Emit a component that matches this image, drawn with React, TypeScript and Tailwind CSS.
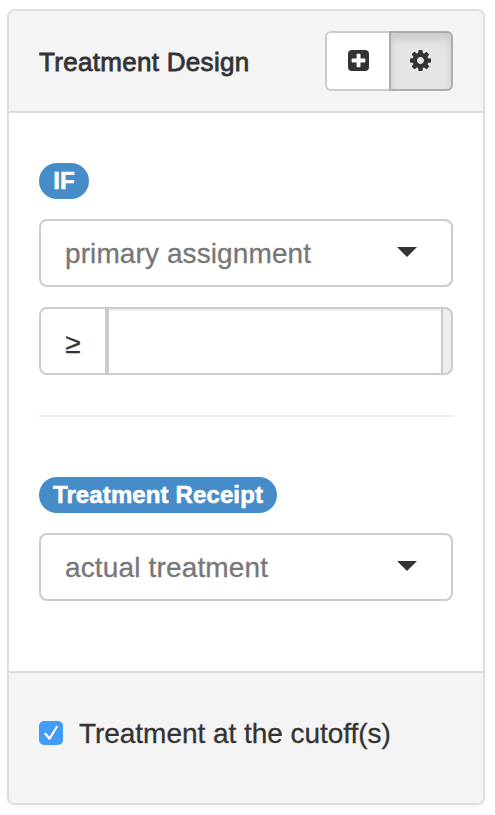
import React from "react";

function PlusSquare() {
  return (
    <svg width="21" height="21" viewBox="0 0 21 21" aria-hidden="true">
      <rect width="21" height="21" rx="4" fill="#333" />
      <path
        d="M9.4 3.7h2.3q.8 0 .8.8v4.1h4.1q.8 0 .8.8v2.2q0 .8-.8.8h-4.1v4.1q0 .8-.8.8H9.4q-.8 0-.8-.8v-4.1H4.4q-.8 0-.8-.8V9.4q0-.8.8-.8h4.2V4.5q0-.8.8-.8z"
        fill="#fff"
      />
    </svg>
  );
}

function Cog() {
  return (
    <svg width="21" height="21" viewBox="0 -128 1536 1536" fill="#333" fillRule="evenodd" aria-hidden="true">
      <path d="M1024 640q0 106-75 181t-181 75-181-75-75-181 75-181 181-75 181 75 75 181zm512-109v222q0 12-8 23t-20 13l-185 28q-19 54-39 91 35 50 107 138 10 12 10 25t-9 23q-27 37-99 108t-94 71q-12 0-26-9l-138-108q-44 23-91 38-16 136-29 186-7 28-36 28h-222q-14 0-24.5-8.5t-11.5-21.5l-28-184q-49-16-90-37l-141 107q-10 9-25 9-14 0-25-11-126-114-165-168-7-10-7-23 0-12 8-23 15-21 51-66.5t54-70.5q-27-50-41-99l-183-27q-13-2-21-12.5t-8-23.5v-222q0-12 8-23t19-13l186-28q14-46 39-92-40-57-107-138-10-12-10-24 0-10 9-23 26-36 98.5-107.5t94.5-71.5q13 0 26 10l138 107q44-23 91-38 16-136 29-186 7-28 36-28h222q14 0 24.5 8.5t11.5 21.5l28 184q49 16 90 37l142-107q9-9 24-9 13 0 25 10 129 119 165 170 7 8 7 22 0 12-8 23-15 21-51 66.5t-54 70.5q26 50 41 98l183 28q13 2 21 12.5t8 23.5z" />
    </svg>
  );
}

function Badge({ children, className }: { children: string; className: string }) {
  return (
    <span
      className={`flex h-9 items-center justify-center rounded-full bg-[#468cc8] pb-px text-2xl font-bold whitespace-nowrap text-white [-webkit-text-stroke:0.6px_#fff] ${className}`}
    >
      {children}
    </span>
  );
}

function Select({ value, className }: { value: string; className: string }) {
  return (
    <button
      type="button"
      className="flex h-[68px] w-full items-center justify-between rounded-lg border-2 border-[#ccc] bg-white pr-[34px] pl-6 text-[#777]"
    >
      <span className={`pt-px text-[28px] leading-10 whitespace-nowrap [-webkit-text-stroke:0.3px_#777] ${className}`}>
        {value}
      </span>
      <svg width="20" height="10" viewBox="0 0 20 10" className="mb-[3px]" aria-hidden="true">
        <path d="M0 0h20L10 10z" fill="#333" />
      </svg>
    </button>
  );
}

export default function App() {
  return (
    <main className="h-[815px] w-[495px] bg-white pt-[9px] pl-[7px] font-['Liberation_Sans',Arial,sans-serif] text-[#333]">
      <section className="flex h-[796px] w-[478px] flex-col overflow-hidden rounded-lg border-2 border-[#ddd] bg-white shadow-[0_2px_4px_rgba(0,0,0,0.05)]">
        <header className="flex h-[102px] shrink-0 items-center justify-between border-b-2 border-[#ddd] bg-[#f4f4f4] px-[30px]">
          <h1 className="pt-0.5 text-[26px] font-normal tracking-[0.3px] whitespace-nowrap [-webkit-text-stroke:0.8px_#333]">
            Treatment Design
          </h1>
          <div className="flex h-[60px]">
            <button
              type="button"
              aria-label="Add"
              className="flex w-16 items-center justify-center rounded-l-md border-2 border-r-0 border-[#ccc] bg-white pb-px"
            >
              <PlusSquare />
            </button>
            <button
              type="button"
              aria-label="Settings"
              className="flex w-16 items-center justify-center rounded-r-md border-2 border-[#adadad] bg-[#e6e6e6] pr-px pb-px shadow-[inset_0_6px_10px_rgba(0,0,0,0.125)]"
            >
              <Cog />
            </button>
          </div>
        </header>

        <div className="flex flex-1 flex-col items-start px-[30px] pt-[50px]">
          <Badge className="w-[50px]">IF</Badge>
          <div className="mt-5 w-full">
            <Select value="primary assignment" className="tracking-[0.1px]" />
          </div>
          <div className="mt-5 flex h-[68px] w-full overflow-hidden rounded-lg border-2 border-[#ccc] bg-[#eee]">
            <span className="flex w-[66px] items-center justify-center border-r-2 border-[#ccc] bg-white pt-1.5 text-[28px] [-webkit-text-stroke:0.25px_#333]">
              ≥
            </span>
            <input
              type="text"
              aria-label="Cutoff"
              className="min-w-0 flex-1 border-x-2 border-[#ccc] bg-white px-6 text-[28px] shadow-[inset_0_2px_2px_rgba(0,0,0,0.075)] outline-none"
            />
            <span className="w-2" />
          </div>
          <hr className="mt-10 w-full border-t-2 border-[#eee]" />
          <Badge className="mt-[60px] w-[238px] tracking-[0.12px]">Treatment Receipt</Badge>
          <div className="mt-5 w-full">
            <Select value="actual treatment" className="tracking-[0.15px]" />
          </div>
        </div>

        <footer className="flex h-[132px] shrink-0 items-center border-t-2 border-[#ddd] bg-[#f4f4f4] px-[30px] pb-2.5">
          <label className="flex items-center gap-4 text-[28px] leading-10 whitespace-nowrap">
            <span role="checkbox" aria-checked="true" className="flex size-6 items-center justify-center rounded-[5px] bg-[#429cfa]">
              <svg width="24" height="24" viewBox="0 0 24 24" fill="none" aria-hidden="true">
                <path d="M6.3 13.7l4.2 4.6L17.8 6.8" stroke="#1c70cc" strokeOpacity=".5" strokeWidth="2.4" strokeLinecap="round" strokeLinejoin="round" />
                <path d="M6.3 12.8l4.1 5L17.8 6" stroke="#fff" strokeWidth="2.3" strokeLinecap="round" strokeLinejoin="round" />
              </svg>
            </span>
            <span className="pt-px tracking-[-0.04px] [-webkit-text-stroke:0.3px_#333]">Treatment at the cutoff(s)</span>
          </label>
        </footer>
      </section>
    </main>
  );
}
